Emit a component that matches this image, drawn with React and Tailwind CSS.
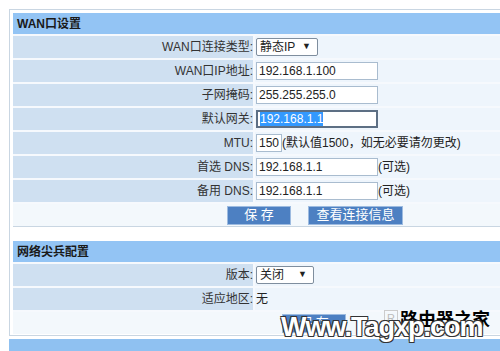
import { useEffect, useRef } from "react";

const font = "font-['Liberation_Sans','Noto_Sans_CJK_SC',sans-serif]";

const Row = ({ label, children }) => (
  <div className="flex gap-[2px] h-[22px]">
    <div className="w-[240px] shrink-0 bg-[#cfe0f1] flex items-center justify-end text-[12px] text-[#333]">
      {label}:
    </div>
    <div className="flex-1 bg-[#eef5fc] flex items-center pl-[1px] text-[12px] text-[#222]">
      {children}
    </div>
  </div>
);

const Select = ({ value, width }) => (
  <div className={`${width} h-[18px] bg-white border border-[#7f8e9e] rounded-[2px] flex items-center justify-between pl-[3px] pr-[6px] text-[12px] text-[#222]`}>
    <span>{value}</span>
    <span className="text-[9px]">▼</span>
  </div>
);

const Input = ({ value, width = "w-[122px]", focused }) => {
  const ref = useRef(null);
  useEffect(() => {
    if (focused && ref.current) {
      ref.current.focus();
      ref.current.select();
    }
  }, [focused]);
  return (
    <input
      ref={ref}
      defaultValue={value}
      className={`${width} h-[18px] bg-white px-[2px] text-[12px] text-[#222] outline-none ${font} ${
        focused ? "border-2 border-[#5d6f84] selection:bg-[#3399ff] selection:text-white" : "border border-[#a9bccf]"
      }`}
    />
  );
};

const Header = ({ title }) => (
  <div className="h-[21px] bg-[#93c4f4] flex items-center pl-[4px] text-[12px] font-bold text-[#1a1a1a]">
    {title}
  </div>
);

const Button = ({ children, width }) => (
  <div className={`${width} h-[19px] bg-[#4d80c2] border border-[#9dbbe0] flex items-center justify-center text-[13px] text-white`}>
    {children}
  </div>
);

export default function App() {
  return (
    <div className={`w-[500px] h-[351px] bg-white overflow-hidden relative ${font}`}>
      <div className="ml-[9px] mt-[9px] border border-r-0 border-[#c9d6e2] pl-[3px] pt-[3px] pb-[1px]">
        <div className="flex flex-col gap-[2px] bg-[#f6f9fd]">
          <Header title="WAN口设置" />
          <Row label="WAN口连接类型">
            <Select value="静态IP" width="w-[62px]" />
          </Row>
          <Row label="WAN口IP地址">
            <Input value="192.168.1.100" />
          </Row>
          <Row label="子网掩码">
            <Input value="255.255.255.0" />
          </Row>
          <Row label="默认网关">
            <Input value="192.168.1.1" focused />
          </Row>
          <Row label="MTU">
            <Input value="1500" width="w-[26px]" />
            <span>(默认值1500，如无必要请勿更改)</span>
          </Row>
          <Row label="首选 DNS">
            <Input value="192.168.1.1" />
            <span>(可选)</span>
          </Row>
          <Row label="备用 DNS">
            <Input value="192.168.1.1" />
            <span>(可选)</span>
          </Row>
          <div className="h-[23px] bg-[#f3f8fc] flex items-center pl-[214px] gap-[17px] border-b border-[#c9d6e2]">
            <Button width="w-[64px]">保 存</Button>
            <Button width="w-[95px]">查看连接信息</Button>
          </div>
        </div>

        <div className="mt-[14px] flex flex-col gap-[2px] bg-[#f6f9fd]">
          <Header title="网络尖兵配置" />
          <Row label="版本">
            <Select value="关闭" width="w-[58px]" />
          </Row>
          <Row label="适应地区">
            <span>无</span>
          </Row>
          <div className="h-[22px] bg-[#f3f8fc] flex items-center pl-[269px]">
            <Button width="w-[64px]">保 存</Button>
          </div>
        </div>
      </div>
      <div className="ml-[9px] mt-[3px] h-[14px] bg-[#8fc1f1]" />

      <div className="absolute left-[384px] top-[309px] flex items-center gap-[2px]">
        <div className="w-[14px] h-[16px] border border-[#ccc] text-[11px] text-[#bbb] flex items-center justify-center">R</div>
        <span className="text-[18px] font-bold text-black leading-none font-['Noto_Sans_CJK_SC',sans-serif]">路由器之家</span>
      </div>
      <div className="absolute left-[281px] top-[314px] text-[27px] font-bold text-white tracking-[-1px] leading-none font-['Liberation_Sans',sans-serif] [text-shadow:1px_1px_0_#333,-1px_-1px_0_#333,1px_-1px_0_#333,-1px_1px_0_#333]">
        Www.Tagxp.com
      </div>
    </div>
  );
}
